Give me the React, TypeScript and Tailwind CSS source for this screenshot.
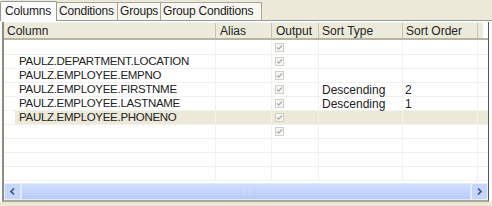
import React from 'react';

const cols = [
  { key: 'column', label: 'Column', w: 'w-[212px]', pl: 'pl-[3px]' },
  { key: 'alias', label: 'Alias', w: 'w-[56px]', pl: 'pl-[4px]' },
  { key: 'output', label: 'Output', w: 'w-[47px]', pl: 'pl-[4px]' },
  { key: 'sortType', label: 'Sort Type', w: 'w-[84px]', pl: 'pl-[3px]' },
  { key: 'sortOrder', label: 'Sort Order', w: 'w-[75px]', pl: 'pl-[3px]' },
] as const;

type Row = { column: string; sortType: string; sortOrder: string; check: boolean; selected?: boolean };

const rows: Row[] = [
  { column: '', sortType: '', sortOrder: '', check: true },
  { column: 'PAULZ.DEPARTMENT.LOCATION', sortType: '', sortOrder: '', check: true },
  { column: 'PAULZ.EMPLOYEE.EMPNO', sortType: '', sortOrder: '', check: true },
  { column: 'PAULZ.EMPLOYEE.FIRSTNME', sortType: 'Descending', sortOrder: '2', check: true },
  { column: 'PAULZ.EMPLOYEE.LASTNAME', sortType: 'Descending', sortOrder: '1', check: true },
  { column: 'PAULZ.EMPLOYEE.PHONENO', sortType: '', sortOrder: '', check: true, selected: true },
  { column: '', sortType: '', sortOrder: '', check: true },
  { column: '', sortType: '', sortOrder: '', check: false },
  { column: '', sortType: '', sortOrder: '', check: false },
  { column: '', sortType: '', sortOrder: '', check: false },
];

const tabs = [
  { label: 'Columns', w: 'w-[57px]', pl: 'pl-[4px]' },
  { label: 'Conditions', w: 'w-[61px]', pl: 'pl-[2px]' },
  { label: 'Groups', w: 'w-[43px]', pl: 'pl-[2px]' },
  { label: 'Group Conditions', w: 'w-[101px]', pl: 'pl-[2px]' },
];

const Check = () => (
  <svg width="9" height="9" viewBox="0 0 9 9" className="block">
    <rect x="0.5" y="0.5" width="8" height="8" fill="#f6f6f2" stroke="#cfcfc6" />
    <path d="M2 4.3 L3.7 6.2 L7 2.5" fill="none" stroke="#9fb0a6" strokeWidth="1.2" />
  </svg>
);

const Arrow = ({ dir }: { dir: 'left' | 'right' }) => (
  <svg width="5" height="7" viewBox="0 0 5 7" className="block">
    <path
      d={dir === 'left' ? 'M4 0.5 L1 3.5 L4 6.5' : 'M1 0.5 L4 3.5 L1 6.5'}
      fill="none"
      stroke="#3d5380"
      strokeWidth="1.6"
    />
  </svg>
);

export default function App() {
  return (
    <div className="w-[492px] h-[206px] bg-[#ece9d8] overflow-hidden text-[12px] text-[#222] font-['Liberation_Sans',Arial,sans-serif] leading-none">
      <div className="flex h-[20px] items-end tracking-[-0.2px]">
        {tabs.map((t, i) => (
          <div
            key={t.label}
            className={
              i === 0
                ? `${t.w} ${t.pl} h-[20px] pt-[3px] bg-[#fcfcfe] border-l border-t border-r border-[#919b9c] rounded-t-[2px] relative z-10 mb-[-1px] shrink-0`
                : `${t.w} ${t.pl} h-[18px] pt-[2px] bg-[#f7f6f1] border-r border-t border-[#a7a69c] shrink-0 whitespace-nowrap`
            }
          >
            {t.label}
          </div>
        ))}
      </div>
      <div className="h-[182px] border-t border-[#919b9c] bg-[#fcfcfe] pt-[1px] pl-[2px] pr-[3px] flex flex-col">
        <div className="h-[181px] border-l-2 border-l-[#8f8c80] border-r border-r-[#55544e] border-b-2 border-b-[#aca899] bg-white flex flex-col overflow-hidden">
          <div className="flex h-[18px] shrink-0 bg-[#ebeadb] border-t border-t-[#f6f5ee] border-b-2 border-b-[#b8b4a3]">
            {cols.map((c) => (
              <div key={c.key} className={`${c.w} ${c.pl} border-r border-[#c7c5b2] pt-[2px] shrink-0`}>
                {c.label}
              </div>
            ))}
            <div className="w-[5px] shrink-0" />
            <div className="flex-1 bg-white" />
          </div>
          <div className="h-[144px] pt-[1px] flex flex-col overflow-hidden">
            {rows.map((r, i) => (
              <div key={i} className="flex h-[14px] shrink-0">
                <div className="w-[11px] shrink-0 border-b border-[#f1f1ee]" />
                <div
                  className={`flex-1 flex border-b border-[#f1f1ee] ${r.selected ? 'bg-[#ece9d8]' : ''}`}
                >
                  <div className="w-[201px] shrink-0 border-r border-[#f1f1ee] pt-[1px] text-[11.5px] tracking-[-0.3px] pl-[4px]">{r.column}</div>
                  <div className="w-[56px] shrink-0 border-r border-[#f1f1ee]" />
                  <div className="w-[47px] shrink-0 border-r border-[#f1f1ee] pl-[3px] pt-[2px]">{r.check && <Check />}</div>
                  <div className="w-[84px] shrink-0 border-r border-[#f1f1ee] pl-[3px] pt-[1px]">{r.sortType}</div>
                  <div className="w-[75px] shrink-0 border-r border-[#f1f1ee] pl-[2px] pt-[1px]">{r.sortOrder}</div>
                  <div className="flex-1" />
                </div>
              </div>
            ))}
          </div>
          <div className="h-[17px] shrink-0 flex bg-[#c3d3fd]">
            <div className="w-[17px] h-full bg-[#c5d6fd] border border-[#e6eeff] flex items-center justify-center">
              <Arrow dir="left" />
            </div>
            <div className="flex-1 bg-[linear-gradient(#cfddff,#b7cbfa)] border border-[#e1e9fe] flex items-center justify-center">
              <div className="w-[7px] h-[7px] border-x border-[#dfe7fd] opacity-60" />
            </div>
            <div className="w-[17px] h-full bg-[#c5d6fd] border border-[#e6eeff] flex items-center justify-center">
              <Arrow dir="right" />
            </div>
          </div>
        </div>
      </div>
    </div>
  );
}
